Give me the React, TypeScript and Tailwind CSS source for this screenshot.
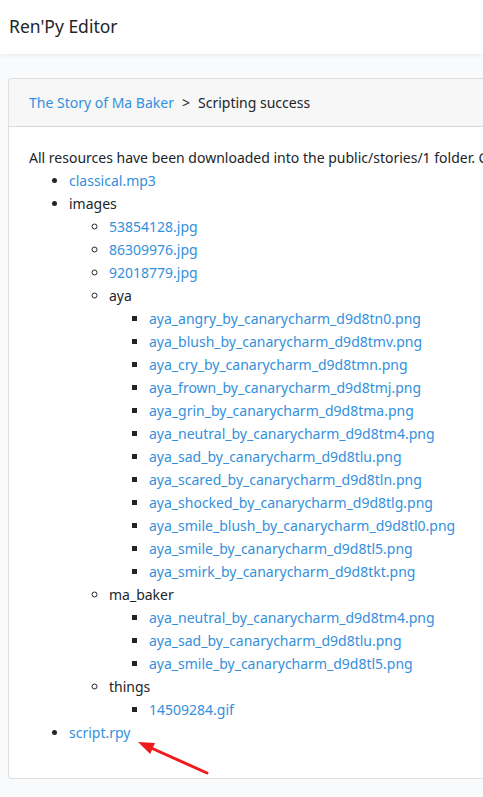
import React from "react";

const A = ({ children }: { children: React.ReactNode }) => (
  <a href="#" className="text-[#3490dc] no-underline">{children}</a>
);

const ayaFiles = [
  "aya_angry_by_canarycharm_d9d8tn0.png",
  "aya_blush_by_canarycharm_d9d8tmv.png",
  "aya_cry_by_canarycharm_d9d8tmn.png",
  "aya_frown_by_canarycharm_d9d8tmj.png",
  "aya_grin_by_canarycharm_d9d8tma.png",
  "aya_neutral_by_canarycharm_d9d8tm4.png",
  "aya_sad_by_canarycharm_d9d8tlu.png",
  "aya_scared_by_canarycharm_d9d8tln.png",
  "aya_shocked_by_canarycharm_d9d8tlg.png",
  "aya_smile_blush_by_canarycharm_d9d8tl0.png",
  "aya_smile_by_canarycharm_d9d8tl5.png",
  "aya_smirk_by_canarycharm_d9d8tkt.png",
];
const maFiles = [
  "aya_neutral_by_canarycharm_d9d8tm4.png",
  "aya_sad_by_canarycharm_d9d8tlu.png",
  "aya_smile_by_canarycharm_d9d8tl5.png",
];

export default function App() {
  return (
    <div
      className="min-h-[797px] w-[483px] overflow-hidden bg-[#f8fafc] text-[#212529] text-[14px] leading-[23px]"
      style={{ fontFamily: '"Noto Sans", sans-serif' }}
    >
      <nav className="h-[54px] bg-white shadow-[0_2px_4px_rgba(0,0,0,0.05)] flex items-center px-[9px]">
        <span className="text-[17.5px] leading-none">Ren'Py Editor</span>
      </nav>
      <main className="pt-[24px] pl-[8px]">
        <div className="relative w-[620px] bg-white border border-[rgba(0,0,0,0.125)] rounded-[4px]">
          <div className="bg-[rgba(0,0,0,0.03)] border-b border-[rgba(0,0,0,0.125)] px-[20px] py-[12px] h-[48px]">
            <A>The Story of Ma Baker</A>
            <span className="mx-[8px]">&gt;</span>
            <span>Scripting success</span>
          </div>
          <div className="px-[20px] pt-[19px] pb-[20px]">
            <div className="whitespace-nowrap">All resources have been downloaded into the public/stories/1 folder. Continue.</div>
            <ul className="list-disc pl-[40px] mb-[14px]">
              <li><A>classical.mp3</A></li>
              <li>
                images
                <ul className="list-[circle] pl-[40px]">
                  <li><A>53854128.jpg</A></li>
                  <li><A>86309976.jpg</A></li>
                  <li><A>92018779.jpg</A></li>
                  <li>
                    aya
                    <ul className="list-[square] pl-[40px]">
                      {ayaFiles.map((f) => (
                        <li key={f}><A>{f}</A></li>
                      ))}
                    </ul>
                  </li>
                  <li>
                    ma_baker
                    <ul className="list-[square] pl-[40px]">
                      {maFiles.map((f) => (
                        <li key={f}><A>{f}</A></li>
                      ))}
                    </ul>
                  </li>
                  <li>
                    things
                    <ul className="list-[square] pl-[40px]">
                      <li><A>14509284.gif</A></li>
                    </ul>
                  </li>
                </ul>
              </li>
              <li><A>script.rpy</A></li>
            </ul>
          </div>
          <svg
            className="absolute left-[126px] top-[655px]"
            width="90"
            height="50"
            viewBox="0 0 90 50"
          >
            <line x1="72" y1="39" x2="14" y2="13" stroke="#ee1c1c" strokeWidth="3" strokeLinecap="round" />
            <polygon points="3,8 20,9 15.2,20" fill="#ee1c1c" />
          </svg>
        </div>
      </main>
    </div>
  );
}
